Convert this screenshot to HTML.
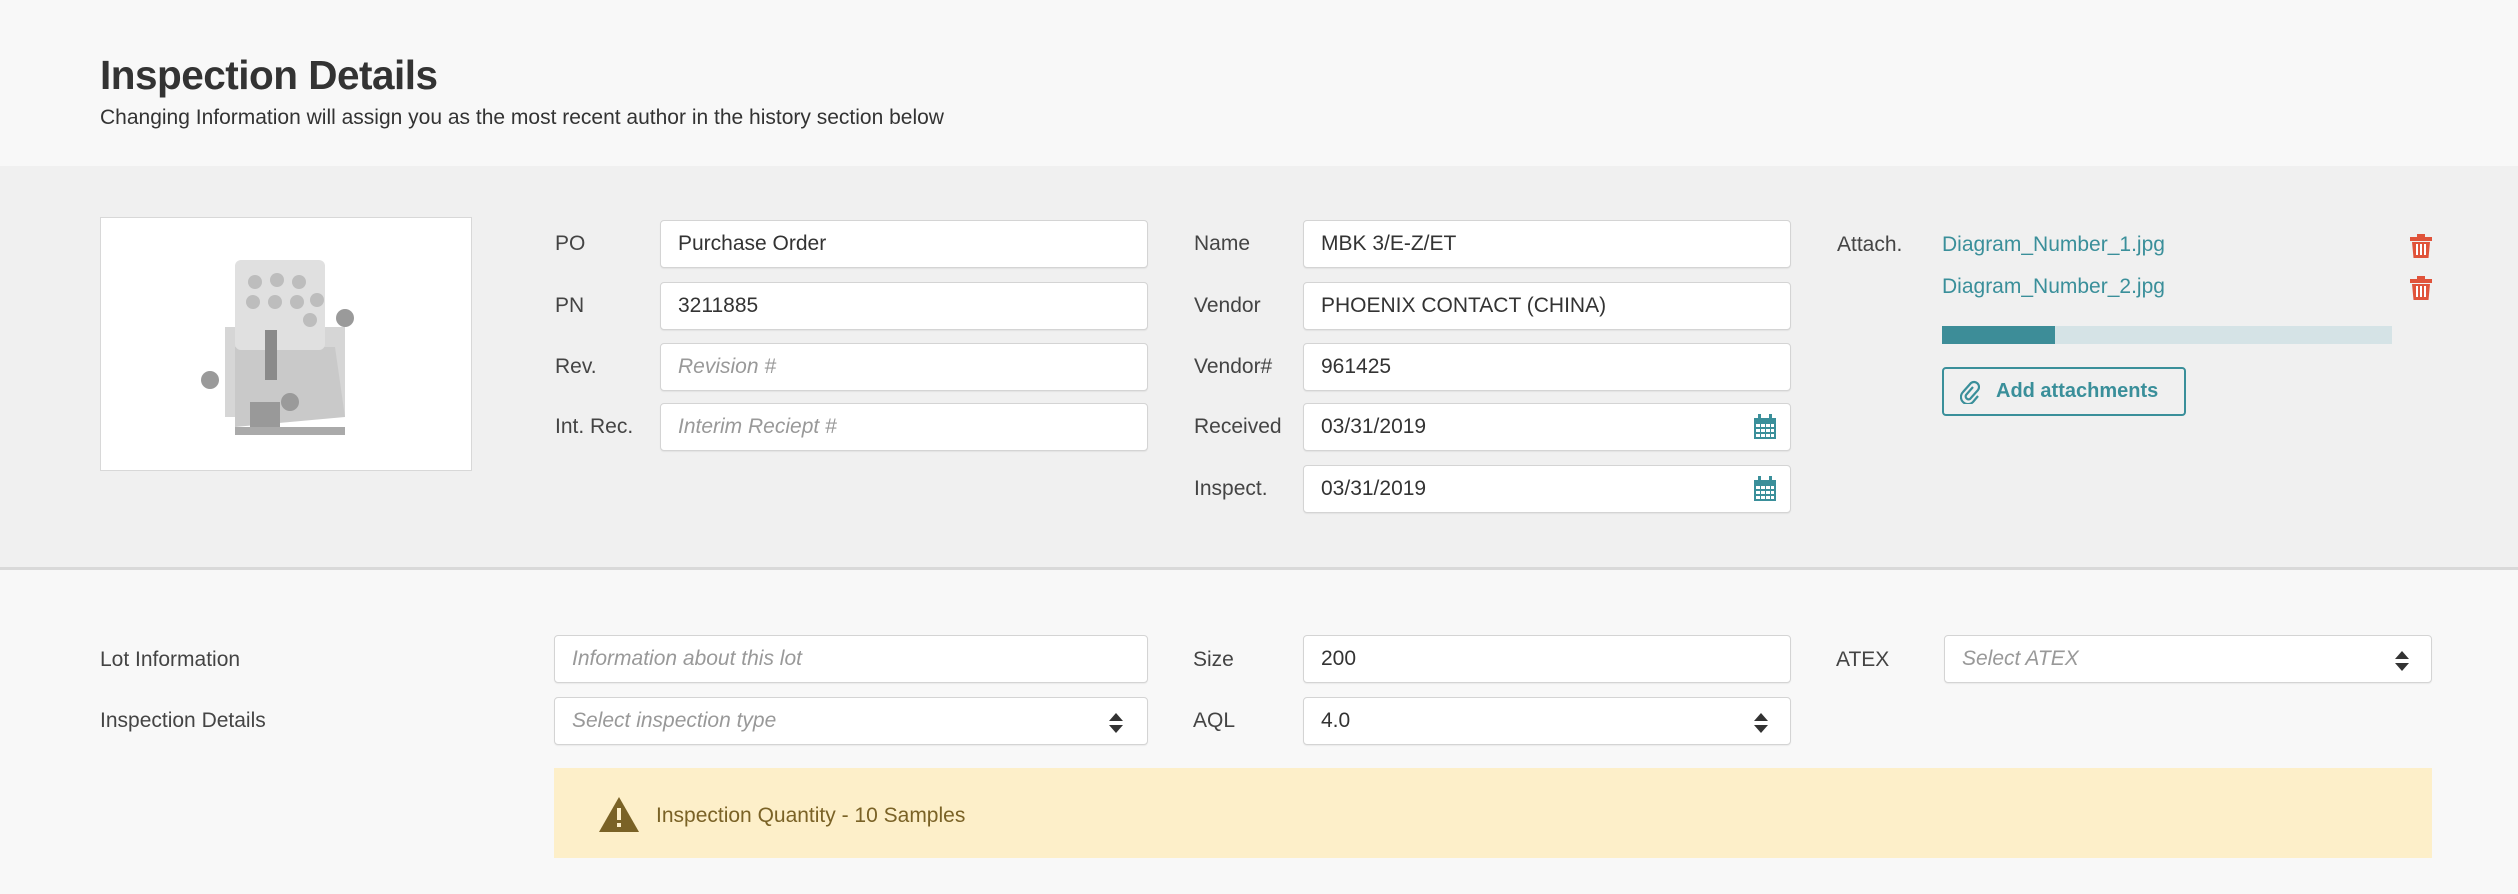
<!DOCTYPE html>
<html><head><meta charset="utf-8"><style>
*{margin:0;padding:0;box-sizing:border-box}
body{width:2518px;height:894px;background:#f8f8f8;font-family:"Liberation Sans",sans-serif;position:relative;overflow:hidden;color:#333}
.a{position:absolute}
h1{position:absolute;left:100px;top:52px;font-size:40.5px;font-weight:bold;color:#333;letter-spacing:-0.5px}
.sub{left:100px;top:106px;font-size:21px;color:#333}
.band{left:0;top:166px;width:2518px;height:404px;background:#f0f0f0;border-bottom:3px solid #d9d9d9}
.lbl{position:absolute;font-size:21px;color:#444;transform:translateY(-50%)}
.in{position:absolute;height:48px;background:#fff;border:1px solid #d4d4d4;border-radius:4px;font-size:21px;color:#333;padding-left:17px;line-height:46px;box-shadow:0 1px 1px rgba(0,0,0,.06)}
.ph{color:#999;font-style:italic}
.link{position:absolute;left:1942px;font-size:21px;color:#3a8f9a;transform:translateY(-50%)}
.arr{position:absolute;right:16px;top:13px}
</style></head><body>
<h1>Inspection Details</h1>
<div class="a sub">Changing Information will assign you as the most recent author in the history section below</div>
<div class="a band"></div>
<div class="a" style="left:100px;top:217px;width:372px;height:254px;background:#fff;border:1px solid #d8d8d8"></div>
<svg class="a" style="left:195px;top:252px" width="175" height="188" viewBox="0 0 175 188">
<rect x="30" y="75" width="120" height="90" fill="#d6d6d6"/>
<polygon points="40,95 140,95 150,165 40,175" fill="#c9c9c9"/>
<rect x="40" y="8" width="90" height="90" rx="6" fill="#e0e0e0"/>
<g fill="#bdbdbd"><circle cx="60" cy="30" r="7"/><circle cx="82" cy="28" r="7"/><circle cx="104" cy="30" r="7"/><circle cx="58" cy="50" r="7"/><circle cx="80" cy="50" r="7"/><circle cx="102" cy="50" r="7"/><circle cx="122" cy="48" r="7"/><circle cx="115" cy="68" r="7"/></g>
<rect x="70" y="78" width="12" height="50" fill="#8a8a8a"/>
<circle cx="15" cy="128" r="9" fill="#9a9a9a"/><circle cx="150" cy="66" r="9" fill="#9a9a9a"/><circle cx="95" cy="150" r="9" fill="#9a9a9a"/>
<rect x="55" y="150" width="30" height="25" fill="#999"/>
<rect x="40" y="175" width="110" height="8" fill="#aaa"/>
</svg>

<div class="lbl" style="left:555px;top:244px">PO</div>
<div class="lbl" style="left:555px;top:306px">PN</div>
<div class="lbl" style="left:555px;top:367px">Rev.</div>
<div class="lbl" style="left:555px;top:427px">Int. Rec.</div>
<div class="in" style="left:660px;top:220px;width:488px">Purchase Order</div>
<div class="in" style="left:660px;top:282px;width:488px">3211885</div>
<div class="in ph" style="left:660px;top:343px;width:488px">Revision #</div>
<div class="in ph" style="left:660px;top:403px;width:488px">Interim Reciept #</div>

<div class="lbl" style="left:1194px;top:244px">Name</div>
<div class="lbl" style="left:1194px;top:306px">Vendor</div>
<div class="lbl" style="left:1194px;top:367px">Vendor#</div>
<div class="lbl" style="left:1194px;top:427px">Received</div>
<div class="lbl" style="left:1194px;top:489px">Inspect.</div>
<div class="in" style="left:1303px;top:220px;width:488px">MBK 3/E-Z/ET</div>
<div class="in" style="left:1303px;top:282px;width:488px">PHOENIX CONTACT (CHINA)</div>
<div class="in" style="left:1303px;top:343px;width:488px">961425</div>
<div class="in" style="left:1303px;top:403px;width:488px">03/31/2019
<svg class="arr" style="top:10px;right:13px" width="24" height="26" viewBox="0 0 24 26"><rect x="1" y="4" width="22" height="21" fill="#3a8f9a"/><rect x="5" y="0" width="3" height="6" fill="#3a8f9a"/><rect x="16" y="0" width="3" height="6" fill="#3a8f9a"/><g fill="#fff"><rect x="3" y="10" width="4" height="3"/><rect x="8" y="10" width="4" height="3"/><rect x="13" y="10" width="4" height="3"/><rect x="18" y="10" width="3" height="3"/><rect x="3" y="15" width="4" height="3"/><rect x="8" y="15" width="4" height="3"/><rect x="13" y="15" width="4" height="3"/><rect x="18" y="15" width="3" height="3"/><rect x="3" y="20" width="4" height="3"/><rect x="8" y="20" width="4" height="3"/><rect x="13" y="20" width="4" height="3"/><rect x="18" y="20" width="3" height="3"/></g></svg></div>
<div class="in" style="left:1303px;top:465px;width:488px">03/31/2019
<svg class="arr" style="top:10px;right:13px" width="24" height="26" viewBox="0 0 24 26"><rect x="1" y="4" width="22" height="21" fill="#3a8f9a"/><rect x="5" y="0" width="3" height="6" fill="#3a8f9a"/><rect x="16" y="0" width="3" height="6" fill="#3a8f9a"/><g fill="#fff"><rect x="3" y="10" width="4" height="3"/><rect x="8" y="10" width="4" height="3"/><rect x="13" y="10" width="4" height="3"/><rect x="18" y="10" width="3" height="3"/><rect x="3" y="15" width="4" height="3"/><rect x="8" y="15" width="4" height="3"/><rect x="13" y="15" width="4" height="3"/><rect x="18" y="15" width="3" height="3"/><rect x="3" y="20" width="4" height="3"/><rect x="8" y="20" width="4" height="3"/><rect x="13" y="20" width="4" height="3"/><rect x="18" y="20" width="3" height="3"/></g></svg></div>

<div class="lbl" style="left:1837px;top:245px">Attach.</div>
<div class="link" style="top:245px">Diagram_Number_1.jpg</div>
<div class="link" style="top:287px">Diagram_Number_2.jpg</div>
<svg class="a" style="left:2410px;top:234px" width="22" height="24" viewBox="0 0 22 24"><rect x="7" y="0" width="8" height="3" fill="#e0533a"/><rect x="0" y="3" width="22" height="4" fill="#e0533a"/><path d="M2 8h18l-1.5 16h-15z" fill="#e0533a"/><g fill="#fff"><rect x="6" y="10" width="2" height="11"/><rect x="10" y="10" width="2" height="11"/><rect x="14" y="10" width="2" height="11"/></g></svg>
<svg class="a" style="left:2410px;top:276px" width="22" height="24" viewBox="0 0 22 24"><rect x="7" y="0" width="8" height="3" fill="#e0533a"/><rect x="0" y="3" width="22" height="4" fill="#e0533a"/><path d="M2 8h18l-1.5 16h-15z" fill="#e0533a"/><g fill="#fff"><rect x="6" y="10" width="2" height="11"/><rect x="10" y="10" width="2" height="11"/><rect x="14" y="10" width="2" height="11"/></g></svg>
<div class="a" style="left:1942px;top:326px;width:450px;height:18px;background:#d5e3e6"><div style="width:113px;height:18px;background:#3d8d98"></div></div>
<div class="a" style="left:1942px;top:367px;width:244px;height:49px;border:2px solid #3a8f9a;border-radius:4px;color:#3a8f9a;font-size:20px;font-weight:bold;line-height:45px;padding-left:52px">Add attachments</div>
<svg class="a" style="left:1960px;top:380px" width="20" height="24" viewBox="0 0 20 24"><path d="M13 7 6 15a3 3 0 0 0 4 4l8-9a5 5 0 0 0-7-7L3 12a7 7 0 0 0 10 10l5-6" fill="none" stroke="#3a8f9a" stroke-width="2.2"/></svg>

<div class="lbl" style="left:100px;top:660px">Lot Information</div>
<div class="lbl" style="left:100px;top:721px">Inspection Details</div>
<div class="in ph" style="left:554px;top:635px;width:594px">Information about this lot</div>
<div class="in ph" style="left:554px;top:697px;width:594px">Select inspection type
<svg class="arr" style="top:15px;right:24px" width="14" height="20" viewBox="0 0 14 20"><path d="M7 0 14 8H0zM0 12h14L7 20z" fill="#333"/></svg></div>

<div class="lbl" style="left:1193px;top:660px">Size</div>
<div class="lbl" style="left:1193px;top:721px">AQL</div>
<div class="in" style="left:1303px;top:635px;width:488px">200</div>
<div class="in" style="left:1303px;top:697px;width:488px">4.0
<svg class="arr" style="top:15px;right:22px" width="14" height="20" viewBox="0 0 14 20"><path d="M7 0 14 8H0zM0 12h14L7 20z" fill="#333"/></svg></div>

<div class="lbl" style="left:1836px;top:660px">ATEX</div>
<div class="in ph" style="left:1944px;top:635px;width:488px">Select ATEX
<svg class="arr" style="top:15px;right:22px" width="14" height="20" viewBox="0 0 14 20"><path d="M7 0 14 8H0zM0 12h14L7 20z" fill="#333"/></svg></div>

<div class="a" style="left:554px;top:768px;width:1878px;height:90px;background:#fdefc9"></div>
<svg class="a" style="left:599px;top:797px" width="40" height="35" viewBox="0 0 40 35"><path d="M20 0 40 35H0z" fill="#7a6226"/><rect x="18" y="11" width="4" height="12" fill="#fdefc9"/><rect x="18" y="26" width="4" height="4" fill="#fdefc9"/></svg>
<div class="lbl" style="left:656px;top:816px;color:#7a6226">Inspection Quantity - 10 Samples</div>
</body></html>
